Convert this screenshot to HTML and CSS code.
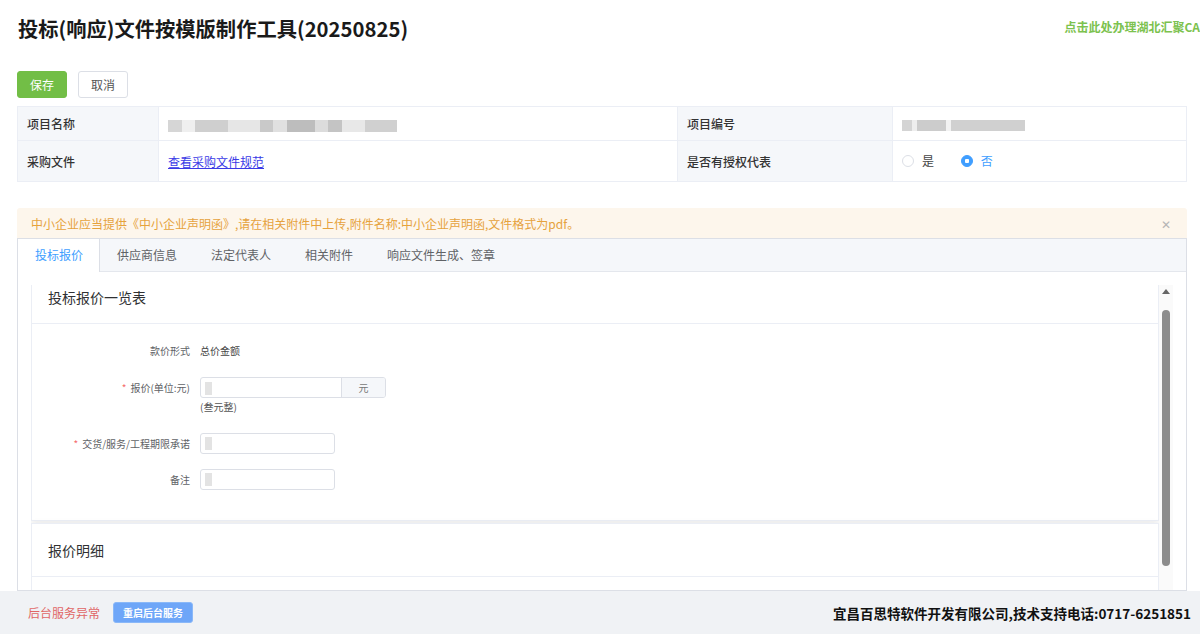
FILE: index.html
```html
<!DOCTYPE html>
<html lang="zh-CN">
<head>
  <meta charset="UTF-8">
  <meta name="viewport" content="width=device-width, initial-scale=1.0">
  <title>投标(响应)文件按模版制作工具</title>
  <link rel="stylesheet" href="styles.css">
</head>
<body>
  <div class="app">
    <div class="header">
      <h1>投标(响应)文件按模版制作工具(20250825)</h1>
      <a class="ca-link" href="#">点击此处办理湖北汇聚CA</a>
    </div>

    <div class="main">
      <div class="toolbar">
        <button class="btn btn-save">保存</button>
        <button class="btn btn-cancel">取消</button>
      </div>

      <table class="info">
        <tr class="row-name">
          <td class="lbl lbl-1">项目名称</td>
          <td class="val val-1"><span class="mask mask-name"></span></td>
          <td class="lbl lbl-2">项目编号</td>
          <td class="val"><span class="mask mask-code"></span></td>
        </tr>
        <tr class="row-file">
          <td class="lbl">采购文件</td>
          <td class="val"><a class="doc-link" href="#">查看采购文件规范</a></td>
          <td class="lbl">是否有授权代表</td>
          <td class="val">
            <label class="radio"><span class="dot"></span>是</label>
            <label class="radio checked"><span class="dot"></span>否</label>
          </td>
        </tr>
      </table>

      <div class="alert">
        <span>中小企业应当提供《中小企业声明函》,请在相关附件中上传,附件名称:中小企业声明函,文件格式为pdf。</span>
        <span class="alert-close">✕</span>
      </div>

      <div class="tabs">
        <div class="tab-nav">
          <div class="tab active">投标报价</div>
          <div class="tab">供应商信息</div>
          <div class="tab">法定代表人</div>
          <div class="tab">相关附件</div>
          <div class="tab">响应文件生成、签章</div>
        </div>
        <div class="tab-pane">
          <div class="scroller" id="scroller">
            <div class="card">
              <div class="card-head">投标报价一览表</div>
              <div class="card-body">
                <div class="form-row">
                  <div class="form-label">款价形式</div>
                  <div class="form-value">总价金额</div>
                </div>
                <div class="form-row">
                  <div class="form-label"><i class="req">*</i>报价(单位:元)</div>
                  <div>
                    <div class="input-group">
                      <div class="input input-wide"><span class="mask mask-in"></span></div>
                      <div class="append">元</div>
                    </div>
                    <div class="help">(叁元整)</div>
                  </div>
                </div>
                <div class="form-row">
                  <div class="form-label"><i class="req">*</i>交货/服务/工程期限承诺</div>
                  <div class="input"><span class="mask mask-in"></span></div>
                </div>
                <div class="form-row">
                  <div class="form-label">备注</div>
                  <div class="input"><span class="mask mask-in"></span></div>
                </div>
              </div>
            </div>

            <div class="card">
              <div class="card-head">报价明细</div>
              <div class="card-body tall"></div>
            </div>
          </div>
          <div class="scrollbar">
            <span class="arrow"></span>
            <span class="thumb"></span>
          </div>
        </div>
      </div>
    </div>

    <div class="footer">
      <span class="err">后台服务异常</span>
      <button class="btn btn-restart">重启后台服务</button>
      <span class="copyright">宜昌百思特软件开发有限公司,技术支持电话:0717-6251851</span>
    </div>
  </div>

  <script>
    document.getElementById("scroller").scrollTop = 15;
  </script>
</body>
</html>
```

FILE: styles.css
```css
html, body {
  margin: 0;
  padding: 0;
  height: 100%;
}

body {
  font-family: "Noto Sans CJK SC", "Noto Sans", sans-serif;
  color: #303133;
  background: #fff;
  overflow: hidden;
}

.app {
  height: 100vh;
  display: flex;
  flex-direction: column;
}

.header {
  display: flex;
  justify-content: space-between;
  align-items: center;
  padding: 13px 0 0 18px;
}

h1 {
  margin: 0;
  font-size: 20.3px;
  line-height: 30px;
  font-weight: 700;
  color: #1a1a1a;
}

.ca-link {
  color: #7cc24e;
  font-size: 12px;
  font-weight: 700;
  text-decoration: none;
  margin-top: -4px;
}

.main {
  flex: 1;
  min-height: 0;
  display: flex;
  flex-direction: column;
  padding: 0 13px 0 17px;
}

.toolbar {
  display: flex;
  gap: 11px;
  margin-top: 28px;
}

.btn {
  font-family: inherit;
  font-size: 12px;
  height: 27px;
  padding: 0;
  border-radius: 3px;
  cursor: pointer;
}

.btn-save {
  width: 50px;
  background: #72be46;
  border: 1px solid #72be46;
  color: #fff;
}

.btn-cancel {
  width: 50px;
  background: #fff;
  border: 1px solid #dcdfe6;
  color: #555;
}

.info {
  margin-top: 8px;
  width: 100%;
  border-collapse: collapse;
  font-size: 12px;
}

.info td {
  border: 1px solid #ebeef5;
  padding: 0 9px;
}

.row-name td {
  height: 33px;
}

.row-file td {
  height: 40px;
}

.lbl {
  background: #f5f7fa;
  color: #333;
  font-weight: 500;
}

.lbl-1 {
  width: 122px;
}

.val-1 {
  width: 500px;
}

.lbl-2 {
  width: 196px;
}

.mask {
  display: inline-block;
  vertical-align: middle;
  filter: blur(0.6px);
}

.mask-name {
  width: 229px;
  height: 12px;
  background: linear-gradient(90deg, #d6d6d6 0 6%, #efefef 6% 12%, #cfcfcf 12% 26%, #e6e6e6 26% 40%, #c9c9c9 40% 46%, #e0e0e0 46% 52%, #bdbdbd 52% 64%, #dcdcdc 64% 70%, #c4c4c4 70% 76%, #e8e8e8 76% 86%, #d0d0d0 86% 100%);
}

.mask-code {
  width: 123px;
  height: 11px;
  background: linear-gradient(90deg, #d4d4d4 0 8%, #eeeeee 8% 12%, #cccccc 12% 36%, #f2f2f2 36% 40%, #d0d0d0 40% 100%);
}

.doc-link {
  color: #3a3ae6;
  text-decoration: underline;
}

.radio {
  display: inline-flex;
  align-items: center;
  gap: 8px;
  color: #444;
  margin-right: 24px;
}

.radio .dot {
  width: 10px;
  height: 10px;
  border: 1px solid #dcdfe6;
  border-radius: 50%;
  background: #fff;
}

.radio.checked {
  color: #409eff;
}

.radio.checked .dot {
  border-color: #409eff;
  background: radial-gradient(circle, #fff 0 2px, #409eff 2.5px);
}

.alert {
  margin-top: 26px;
  height: 30px;
  display: flex;
  align-items: center;
  justify-content: space-between;
  padding: 0 16px 0 14px;
  background: #fdf6ec;
  color: #e6a23c;
  font-size: 12px;
  border-radius: 3px 3px 0 0;
}

.alert-close {
  color: #b5b5b5;
  font-size: 12px;
}

.tabs {
  flex: 1;
  min-height: 0;
  display: flex;
  flex-direction: column;
  border: 1px solid #dcdfe6;
}

.tab-nav {
  display: flex;
  height: 32px;
  background: #f5f7fa;
  border-bottom: 1px solid #e4e7ed;
}

.tab {
  padding: 0 17px;
  line-height: 32px;
  font-size: 12px;
  color: #606266;
}

.tab.active {
  background: #fff;
  color: #409eff;
  border-right: 1px solid #dcdfe6;
  margin-bottom: -1px;
  padding-right: 16px;
}

.tab-pane {
  flex: 1;
  min-height: 0;
  display: flex;
  padding: 13px 13px 0 13px;
}

.scroller {
  flex: 1;
  overflow: hidden;
}

.card {
  border: 1px solid #ebeef5;
  background: #fff;
  box-shadow: 0 2px 8px rgba(0, 0, 0, 0.08);
  margin-bottom: 2px;
}

.card-head {
  padding: 18px 16px;
  line-height: 16px;
  font-size: 14px;
  color: #303133;
  border-bottom: 1px solid #ebeef5;
}

.card-body {
  padding: 16px 20px 30px;
  font-size: 10px;
  color: #606266;
}

.card-body.tall {
  height: 300px;
}

.form-row {
  display: flex;
  align-items: flex-start;
  margin-bottom: 15px;
}

.form-row:nth-child(2) {
  margin-bottom: 17px;
}

.form-row:last-child {
  margin-bottom: 0;
}

.form-row:first-child .form-label,
.form-value {
  line-height: 22px;
}

.form-label {
  width: 138px;
  padding-right: 10px;
  text-align: right;
  line-height: 21px;
  color: #606266;
}

.form-value {
  color: #444;
}

.req {
  font-style: normal;
  color: #f56c6c;
  margin-right: 4px;
}

.input-group {
  display: flex;
  width: 186px;
  height: 21px;
  border: 1px solid #dcdfe6;
  border-radius: 3px;
  box-sizing: border-box;
  overflow: hidden;
}

.input-group .input {
  border: none;
  border-radius: 0;
  flex: 1;
}

.append {
  width: 43px;
  background: #f5f7fa;
  border-left: 1px solid #dcdfe6;
  text-align: center;
  line-height: 19px;
  color: #777;
}

.input {
  width: 135px;
  height: 21px;
  box-sizing: border-box;
  border: 1px solid #dcdfe6;
  border-radius: 3px;
  display: flex;
  align-items: center;
  padding-left: 4px;
}

.mask-in {
  width: 7px;
  height: 13px;
  background: #e3e3e3;
}

.help {
  line-height: 18px;
  color: #555;
}

.scrollbar {
  width: 14px;
  background: #fafafa;
  display: flex;
  flex-direction: column;
  align-items: center;
}

.arrow {
  margin-top: 4px;
  width: 0;
  height: 0;
  border-left: 4px solid transparent;
  border-right: 4px solid transparent;
  border-bottom: 5px solid #666;
}

.thumb {
  margin-top: 16px;
  width: 8px;
  height: 256px;
  border-radius: 4px;
  background: #8c8c8c;
}

.footer {
  height: 43px;
  flex-shrink: 0;
  display: flex;
  align-items: center;
  padding: 0 9px 0 28px;
  background: #f0f2f5;
  font-size: 12px;
}

.err {
  color: #e06666;
}

.btn-restart {
  margin-left: 13px;
  height: 21px;
  padding: 0 9px;
  font-size: 10px;
  font-weight: 700;
  color: #fff;
  background: #6ea6f8;
  border: 1px solid #8ab8f8;
}

.copyright {
  margin-left: auto;
  font-size: 13.5px;
  font-weight: 700;
  color: #111;
}
```
